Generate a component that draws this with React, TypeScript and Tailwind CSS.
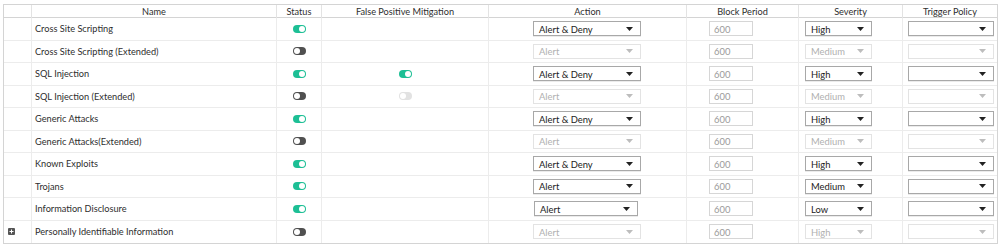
import React from 'react';

type Row = {
    name: string;
    status: boolean;
    fpm?: 'on' | 'disabled';
    action: string;
    severity: string;
    enabled: boolean;
    expandable?: boolean;
    actionNarrow?: boolean;
};

const rows: Row[] = [
    {name: 'Cross Site Scripting', status: true, action: 'Alert & Deny', severity: 'High', enabled: true},
    {name: 'Cross Site Scripting (Extended)', status: false, action: 'Alert', severity: 'Medium', enabled: false},
    {name: 'SQL Injection', status: true, fpm: 'on', action: 'Alert & Deny', severity: 'High', enabled: true},
    {name: 'SQL Injection (Extended)', status: false, fpm: 'disabled', action: 'Alert', severity: 'Medium', enabled: false},
    {name: 'Generic Attacks', status: true, action: 'Alert & Deny', severity: 'High', enabled: true},
    {name: 'Generic Attacks(Extended)', status: false, action: 'Alert', severity: 'Medium', enabled: false},
    {name: 'Known Exploits', status: true, action: 'Alert & Deny', severity: 'High', enabled: true},
    {name: 'Trojans', status: true, action: 'Alert', severity: 'Medium', enabled: true},
    {name: 'Information Disclosure', status: true, action: 'Alert', severity: 'Low', enabled: true, actionNarrow: true},
    {name: 'Personally Identifiable Information', status: false, action: 'Alert', severity: 'High', enabled: false, expandable: true},
];

const cols = 'grid grid-cols-[28px_245px_45px_167px_198px_112px_104px_94px]';

const Toggle = ({on, disabled}: {on: boolean; disabled?: boolean}) => {
    if (disabled) {
        return (
            <span className="relative inline-block w-[13px] h-[8px] rounded-full bg-[#e2e2e2]">
                <span className="absolute left-[1px] top-[1px] w-[6px] h-[6px] rounded-full bg-white"/>
            </span>
        );
    }
    return (
        <span className={`relative inline-block w-[13px] h-[8px] rounded-full ${on ? 'bg-[#1dbf95]' : 'bg-[#505050]'}`}>
            <span className={`absolute top-[1px] w-[6px] h-[6px] rounded-full bg-white ${on ? 'right-[1px]' : 'left-[1px]'}`}/>
        </span>
    );
};

const Caret = ({disabled}: {disabled?: boolean}) => (
    <svg width="7" height="4" viewBox="0 0 7 4" className="shrink-0">
        <path d="M0 0 L7 0 L3.5 4 Z" fill={disabled ? '#bdbdbd' : '#222'}/>
    </svg>
);

const Select = ({value, disabled, className}: {value: string; disabled?: boolean; className: string}) => (
    <div className={`${className} h-[15px] flex items-center justify-between pl-[5px] pr-[7px] border bg-white text-[9.4px] ${disabled ? 'border-[#e3e3e3] text-[#b0b0b0]' : 'border-[#a8a8a8] text-[#222] shadow-[0_1px_0_rgba(0,0,0,0.08)]'}`}>
        <span className="leading-none pt-[1px]">{value}</span>
        <Caret disabled={disabled}/>
    </div>
);

const App: React.FC = () => {
    return (
        <div className="w-[999px] h-[249px] bg-white pt-[4px] pl-[3px] text-[#2e2e2e] text-[9.2px]" style={{fontFamily: 'Lato, "Open Sans", sans-serif'}}>
            <div className="w-[995px] border border-[#d4d4d4]">
                <div className={`${cols} h-[13px] border-b border-[#d4d4d4] text-center leading-[13px]`}>
                    <div className="border-r border-[#e3e3e3]"></div>
                    <div className="border-r border-[#e3e3e3]">Name</div>
                    <div className="border-r border-[#e3e3e3]">Status</div>
                    <div className="border-r border-[#e3e3e3]">False Positive Mitigation</div>
                    <div className="border-r border-[#e3e3e3]">Action</div>
                    <div className="border-r border-[#e3e3e3]">Block Period</div>
                    <div className="border-r border-[#e3e3e3]">Severity</div>
                    <div>Trigger Policy</div>
                </div>
                {rows.map((r, i) => (
                    <div key={r.name} className={`${cols} h-[22.5px] ${i < rows.length - 1 ? 'border-b border-[#ececec]' : ''}`}>
                        <div className="border-r border-[#ececec] flex items-center pl-[4px]">
                            {r.expandable && (
                                <span className="w-[7px] h-[7px] rounded-[1px] bg-[#555] flex items-center justify-center">
                                    <svg width="5" height="5" viewBox="0 0 5 5">
                                        <path d="M2 0.5 H3 V2 H4.5 V3 H3 V4.5 H2 V3 H0.5 V2 H2 Z" fill="#fff"/>
                                    </svg>
                                </span>
                            )}
                        </div>
                        <div className="border-r border-[#ececec] flex items-center pl-[3px] pt-[1px]">{r.name}</div>
                        <div className="border-r border-[#ececec] flex items-center justify-center">
                            <Toggle on={r.status}/>
                        </div>
                        <div className="border-r border-[#ececec] flex items-center justify-center">
                            {r.fpm && <Toggle on={r.fpm === 'on'} disabled={r.fpm === 'disabled'}/>}
                        </div>
                        <div className="border-r border-[#ececec] flex items-center">
                            <Select value={r.action} disabled={!r.enabled}
                                    className={r.actionNarrow ? 'ml-[45px] w-[104px]' : 'ml-[44px] w-[108px]'}/>
                        </div>
                        <div className="border-r border-[#ececec] flex items-center">
                            <div className="ml-[22px] w-[44px] h-[15px] border border-[#d6d6d6] flex items-center pl-[4px] pt-[1px] text-[9.4px] text-[#9a9a9a] leading-none">600</div>
                        </div>
                        <div className="border-r border-[#ececec] flex items-center">
                            <Select value={r.severity} disabled={!r.enabled} className="ml-[6px] w-[67px]"/>
                        </div>
                        <div className="flex items-center">
                            <Select value="" disabled={!r.enabled} className="ml-[5px] w-[86px]"/>
                        </div>
                    </div>
                ))}
            </div>
        </div>
    );
};

export default App;
